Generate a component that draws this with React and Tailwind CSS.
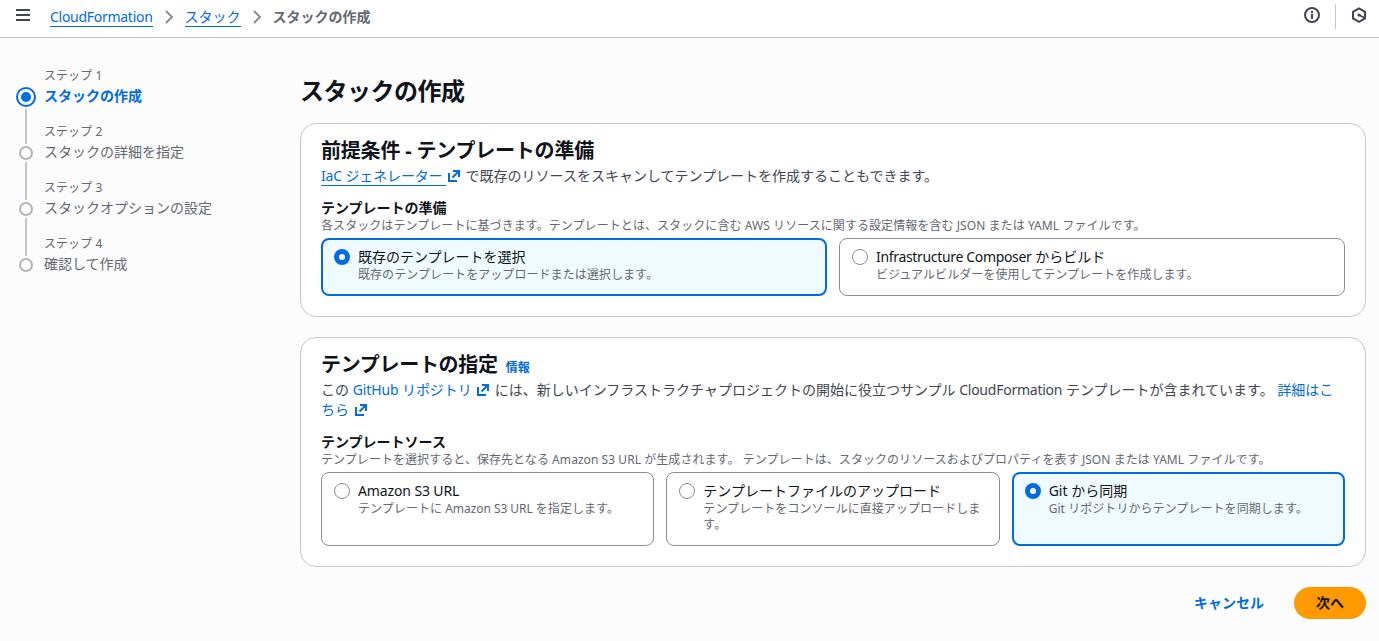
import { useState } from "react";

const pasos = ["スタックの作成", "スタックの詳細を指定", "スタックオプションの設定", "確認して作成"];

const preparaciones = [
  { id: "existente", titulo: "既存のテンプレートを選択", detalle: "既存のテンプレートをアップロードまたは選択します。" },
  {
    id: "composer",
    titulo: <><span className="tracking-[-0.33px]">Infrastructure Composer</span> からビルド</>,
    detalle: "ビジュアルビルダーを使用してテンプレートを作成します。",
  },
];

const origenes = [
  {
    id: "s3",
    titulo: <span className="tracking-[-0.12px]">Amazon S3 URL</span>,
    detalle: <>テンプレートに <span className="tracking-[-0.06px]">Amazon S3 URL</span> を指定します。</>,
  },
  { id: "archivo", titulo: "テンプレートファイルのアップロード", detalle: "テンプレートをコンソールに直接アップロードします。" },
  { id: "git", titulo: "Git から同期", detalle: "Git リポジトリからテンプレートを同期します。" },
];

function IconoExterno() {
  return (
    <svg className="inline-block size-4 align-[-3px]" viewBox="0 0 16 16" fill="none" stroke="currentColor" strokeWidth="2">
      <path d="M7 3h6v6M13 3 6.5 9.5" />
      <path d="M3 5v8h8" />
    </svg>
  );
}

function Separador() {
  return (
    <svg className="mx-2 size-4" viewBox="0 0 16 16" fill="none" stroke="#8c8c94" strokeWidth="2">
      <path d="m5 2 6 6-6 6" />
    </svg>
  );
}

function Cabecera() {
  return (
    <header className="flex h-[38px] items-start border-b border-[#c6c6cd] bg-white">
      <button type="button" className="mt-[7px] ml-[15px]" aria-label="メニュー">
        <svg className="size-4" viewBox="0 0 16 16" stroke="#424650" strokeWidth="2">
          <path d="M1 3h14M1 8h14M1 13h14" />
        </svg>
      </button>
      <nav className="mt-[7px] ml-[19px] flex h-5 items-center">
        <a href="#" className="border-b border-[#006ce0] leading-[18px] tracking-[-0.28px] text-[#006ce0]">CloudFormation</a>
        <Separador />
        <a href="#" className="border-b border-[#006ce0] leading-[18px] text-[#006ce0]">スタック</a>
        <Separador />
        <span className="font-bold text-[#656871]">スタックの作成</span>
      </nav>
      <div className="mr-3 ml-auto flex items-start text-[#424650]">
        <svg className="mt-[7px] size-4" viewBox="0 0 16 16" fill="none" stroke="currentColor" strokeWidth="2">
          <circle cx="8" cy="8" r="7" />
          <path d="M8 7v5M8 4v2" />
        </svg>
        <span className="mx-[15px] mt-1 h-[25px] w-px bg-[#c6c6cd]" />
        <svg className="mt-[7px] size-4" viewBox="0 0 16 16" fill="none" stroke="currentColor" strokeWidth="2">
          <path d="M8 1.4 14 4.8v6.6L8 14.8 2 11.4V4.8Z" />
          <path d="M13.5 10.8 8 8" strokeWidth="1.8" />
          <circle cx="8" cy="8" r="1.6" fill="currentColor" stroke="none" />
        </svg>
      </div>
    </header>
  );
}

function Pasos() {
  return (
    <ol className="mt-[29px] ml-4 w-[284px] shrink-0">
      {pasos.map((paso, i) => (
        <li key={paso} className="flex h-14">
          <div className="mr-2 flex w-5 flex-col items-center">
            {i === 0 ? (
              <span className="mt-5 flex size-5 shrink-0 items-center justify-center rounded-full border-2 border-[#006ce0]">
                <span className="size-2.5 rounded-full bg-[#006ce0]" />
              </span>
            ) : (
              <span className="mt-[23px] size-3.5 shrink-0 rounded-full border-2 border-[#b4b4bb]" />
            )}
            {i < pasos.length - 1 && (
              <span className={i === 0 ? "mt-0.5 -mb-5 h-[35px] w-0.5 shrink-0 bg-[#c6c6cd]" : "mt-0.5 -mb-5 h-[38px] w-0.5 shrink-0 bg-[#c6c6cd]"} />
            )}
          </div>
          <div>
            <div className="mt-px text-xs leading-4 tracking-[0.06px] text-[#656871]">ステップ {i + 1}</div>
            <div className={i === 0 ? "mt-0.5 font-bold text-[#006ce0]" : "mt-0.5 text-[#656871]"}>{paso}</div>
          </div>
        </li>
      ))}
    </ol>
  );
}

function Opciones({ opciones, valor, onChange, className }) {
  return (
    <div className={`mt-1 grid gap-3 ${className}`}>
      {opciones.map(({ id, titulo, detalle }) => {
        const activa = id === valor;
        return (
          <button
            type="button"
            key={id}
            onClick={() => onChange(id)}
            className={activa
              ? "flex items-start rounded-lg border-2 border-[#006ce0] bg-[#f0fbff] px-2.5 pt-[7px] text-left"
              : "flex items-start rounded-lg border border-[#8c8c94] bg-white px-[11px] pt-2 text-left"}
          >
            <span
              className={activa
                ? "mt-0.5 mr-2 ml-px size-4 shrink-0 rounded-full border-[5px] border-[#006ce0] bg-white"
                : "mt-0.5 mr-2 ml-px size-4 shrink-0 rounded-full border border-[#8c8c94] bg-white"}
            />
            <span className="block">
              <span className="block text-[#0f141a]">{titulo}</span>
              <span className="block text-xs leading-4 tracking-[0.06px] text-[#656871]">{detalle}</span>
            </span>
          </button>
        );
      })}
    </div>
  );
}

export default function App() {
  const [preparacion, setPreparacion] = useState("existente");
  const [origen, setOrigen] = useState("git");

  return (
    <div lang="ja" className="min-h-screen bg-[#fcfcfd] font-['Noto_Sans','Noto_Sans_CJK_JP',sans-serif] text-sm leading-5 text-[#424650]">
      <Cabecera />
      <div className="flex">
        <Pasos />
        <main className="mr-[13px] min-w-0 flex-1">
          <h1 className="mt-[38px] text-2xl leading-[30px] font-bold tracking-[-0.48px] text-[#0f141a]">スタックの作成</h1>

          <section className="mt-[17px] h-[194px] rounded-2xl border border-[#c6c6cd] bg-white px-5 pt-[15px]">
            <h2 className="text-xl leading-6 font-bold tracking-[-0.2px] text-[#0f141a]">前提条件 - テンプレートの準備</h2>
            <p className="mt-[3px]">
              <a href="#" className="text-[#006ce0]">
                <span className="border-b border-[#006ce0] tracking-[-0.15px]">IaC ジェネレーター </span>
                <IconoExterno />
              </a>{" "}
              で既存のリソースをスキャンしてテンプレートを作成することもできます。
            </p>
            <h3 className="mt-3 font-bold text-[#0f141a]">テンプレートの準備</h3>
            <p className="text-xs leading-4 tracking-[0.07px] text-[#656871]">
              各スタックはテンプレートに基づきます。テンプレートとは、スタックに含む AWS リソースに関する設定情報を含む JSON または YAML ファイルです。
            </p>
            <Opciones opciones={preparaciones} valor={preparacion} onChange={setPreparacion} className="h-[58px] grid-cols-2" />
          </section>

          <section className="mt-5 h-[230px] rounded-2xl border border-[#c6c6cd] bg-white px-5 pt-[15px]">
            <div className="flex items-baseline">
              <h2 className="text-xl leading-6 font-bold tracking-[-0.3px] text-[#0f141a]">テンプレートの指定</h2>
              <a href="#" className="ml-2 text-xs leading-4 font-bold text-[#006ce0]">情報</a>
            </div>
            <p className="mt-[3px]">
              この <a href="#" className="text-[#006ce0]"><span className="tracking-[-0.1px]">GitHub リポジトリ </span><IconoExterno /></a>{" "}
              には、新しいインフラストラクチャプロジェクトの開始に役立つサンプル <span className="tracking-[-0.24px]">CloudFormation</span> テンプレートが含まれています。{" "}
              <a href="#" className="text-[#006ce0]">詳細はこちら <IconoExterno /></a>
            </p>
            <h3 className="mt-3 font-bold text-[#0f141a]">テンプレートソース</h3>
            <p className="text-xs leading-4 tracking-[0.06px] text-[#656871]">
              テンプレートを選択すると、保存先となる Amazon S3 URL が生成されます。 テンプレートは、スタックのリソースおよびプロパティを表す JSON または YAML ファイルです。
            </p>
            <Opciones opciones={origenes} valor={origen} onChange={setOrigen} className="h-[74px] grid-cols-3" />
          </section>

          <div className="mt-5 flex justify-end gap-2.5 font-bold">
            <button type="button" className="h-8 px-5 text-[#006ce0]">キャンセル</button>
            <button type="button" className="h-8 w-[72px] rounded-full bg-[#ff9900] text-[#0f141a]">次へ</button>
          </div>
        </main>
      </div>
    </div>
  );
}
